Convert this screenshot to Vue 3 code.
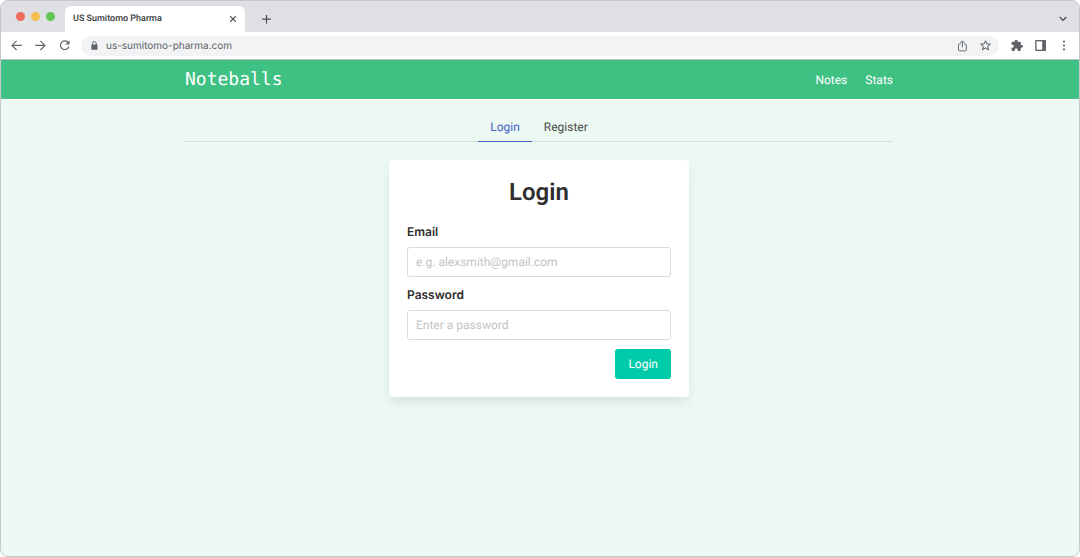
<script setup>
import { ref } from 'vue'

const address = ref('us-sumitomo-pharma.com')
const email = ref('')
const password = ref('')
</script>

<template>
  <div class="window">
    <header class="tab-strip">
      <div class="lights">
        <span class="light red"></span>
        <span class="light yellow"></span>
        <span class="light green"></span>
      </div>
      <div class="browser-tab">
        <span class="tab-title">US Sumitomo Pharma</span>
        <button class="icon-button" type="button" aria-label="Close tab">
          <svg width="8" height="8" viewBox="0 0 8 8"><path d="M1.2 1.2l5.6 5.6M6.8 1.2L1.2 6.8" stroke="#4a4d51" stroke-width="1.2" /></svg>
        </button>
      </div>
      <button class="icon-button new-tab" type="button" aria-label="New tab">
        <svg width="10" height="10" viewBox="0 0 10 10"><path d="M5.5 .9v8.6M1.2 5.2h8.6" stroke="#46494d" stroke-width="1.2" /></svg>
      </button>
      <button class="icon-button tab-menu" type="button" aria-label="Search tabs">
        <svg width="8" height="6" viewBox="0 0 8 6"><path d="M.7 1L4 4.4 7.3 1" fill="none" stroke="#46494d" stroke-width="1.3" /></svg>
      </button>
    </header>

    <div class="toolbar">
      <div class="history">
        <button class="icon-button" type="button" aria-label="Back">
          <svg width="12" height="12" viewBox="0 0 12 12"><path d="M11.8 5.4H2.1M6.6 .8L2 5.4 6.6 10" fill="none" stroke="#5f6368" stroke-width="1.1" /></svg>
        </button>
        <button class="icon-button" type="button" aria-label="Forward">
          <svg width="12" height="12" viewBox="0 0 12 12"><path d="M1.2 5.4h9.7M6.4 .8L11 5.4 6.4 10" fill="none" stroke="#5f6368" stroke-width="1.1" /></svg>
        </button>
        <button class="icon-button" type="button" aria-label="Reload">
          <svg width="12" height="12" viewBox="0 0 12 12"><path d="M10.3 2.7A4.3 4.3 0 1 0 10.9 6.5" fill="none" stroke="#5f6368" stroke-width="1.2" /><path d="M11.5.4v4.2H7.3z" fill="#5f6368" /></svg>
        </button>
      </div>
      <div class="address-bar">
        <svg width="8" height="10" viewBox="0 0 8 10"><path d="M2.6 4V2.4a1.8 1.8 0 0 1 3.6 0V4" fill="none" stroke="#5f6368" stroke-width="1" /><rect x="1.3" y="3.6" width="6.2" height="5.2" rx=".8" fill="#5f6368" /></svg>
        <input v-model="address" class="address" type="text" aria-label="Address" />
        <button class="icon-button" type="button" aria-label="Share">
          <svg width="10" height="12" viewBox="0 0 10 12"><path d="M2.8 4.1H1.2a.7.7 0 0 0-.7.7v5.3c0 .4.3.7.7.7h6.4c.4 0 .7-.3.7-.7V4.8a.7.7 0 0 0-.7-.7H6M4.4 7.4V1M2.4 2.9l2-2 2 2" fill="none" stroke="#6b6f73" stroke-width="1" /></svg>
        </button>
        <button class="icon-button" type="button" aria-label="Bookmark">
          <svg width="12" height="12" viewBox="0 0 12 12"><path d="M5.5 .8l1.4 3.1 3.4.3-2.6 2.3.8 3.3-3-1.8-3 1.8.8-3.3L.7 4.2l3.4-.3z" fill="none" stroke="#505458" stroke-width="1" /></svg>
        </button>
      </div>
      <div class="extensions">
        <button class="icon-button" type="button" aria-label="Extensions">
          <svg width="12" height="12" viewBox="1 2 22 22"><path d="M20.5 11H19V7c0-1.1-.9-2-2-2h-4V3.5a2.5 2.5 0 0 0-5 0V5H4c-1.1 0-2 .9-2 2v3.8h1.5a2.7 2.7 0 0 1 0 5.4H2V20c0 1.1.9 2 2 2h3.8v-1.5a2.7 2.7 0 0 1 5.4 0V22H17c1.1 0 2-.9 2-2v-4h1.5a2.5 2.5 0 0 0 0-5z" fill="#5f6368" /></svg>
        </button>
        <button class="icon-button" type="button" aria-label="Side panel">
          <svg width="12" height="12" viewBox="0 0 12 12"><rect x=".9" y=".7" width="9.4" height="9.6" fill="none" stroke="#5f6368" stroke-width="1.3" /><path d="M7.2.5h3.2v10H7.2z" fill="#5f6368" /></svg>
        </button>
        <button class="icon-button" type="button" aria-label="Menu">
          <svg width="12" height="12" viewBox="0 0 12 12" fill="#5f6368"><circle cx="5" cy="1.6" r="1.1" /><circle cx="5" cy="5.5" r="1.1" /><circle cx="5" cy="9.4" r="1.1" /></svg>
        </button>
      </div>
    </div>

    <nav class="navbar">
      <div class="container navbar-row">
        <a class="brand" href="#">Noteballs</a>
        <div class="links">
          <a href="#notes">Notes</a>
          <a href="#stats">Stats</a>
        </div>
      </div>
    </nav>

    <main class="page">
      <div class="container">
        <div class="auth-tabs">
          <a class="auth-tab active" href="#login">Login</a>
          <a class="auth-tab" href="#register">Register</a>
        </div>
        <form class="card" @submit.prevent>
          <h1>Login</h1>
          <div class="field">
            <label for="email">Email</label>
            <input id="email" v-model="email" type="email" placeholder="e.g. alexsmith@gmail.com" />
          </div>
          <div class="field">
            <label for="password">Password</label>
            <input id="password" v-model="password" type="password" placeholder="Enter a password" />
          </div>
          <div class="actions">
            <button class="submit" type="submit">Login</button>
          </div>
        </form>
      </div>
    </main>
  </div>
</template>

<style>
body {
  background: #fff;
}
</style>

<style scoped>
* {
  box-sizing: border-box;
}

.window {
  display: flex;
  flex-direction: column;
  min-height: 100vh;
  overflow: hidden;
  border: 1px solid #c5c8c8;
  border-radius: 8px;
  background: #ebf9f2;
  font-family: Roboto, "Liberation Sans", sans-serif;
  font-size: 12px;
  line-height: 18px;
  text-rendering: geometricPrecision;
}

a {
  text-decoration: none;
}

.icon-button {
  display: flex;
  flex: none;
  padding: 0;
  border: 0;
  background: none;
}

.tab-strip {
  display: flex;
  align-items: center;
  height: 31px;
  padding: 0 12px 0 15px;
  background: #dfe0e4;
}

.lights {
  display: flex;
  gap: 6px;
}

.light {
  width: 9px;
  height: 9px;
  border-radius: 50%;
}

.red {
  background: #ed6a5e;
}

.yellow {
  background: #f5bf4f;
}

.green {
  background: #61c554;
}

.browser-tab {
  display: flex;
  align-items: center;
  justify-content: space-between;
  align-self: flex-end;
  width: 180px;
  height: 26px;
  margin-left: 10px;
  padding: 0 8px;
  border-radius: 6px 6px 0 0;
  background: #fff;
}

.tab-title {
  color: #35383b;
  font-size: 9px;
  font-weight: 500;
}

.new-tab {
  margin: 5px 0 0 16px;
}

.tab-menu {
  margin: 5px 0 0 auto;
}

.toolbar {
  display: flex;
  align-items: center;
  height: 28px;
  padding: 0 8px 0 9px;
  border-bottom: 1px solid #b9c3c1;
  background: #fff;
}

.history,
.extensions {
  display: flex;
  gap: 12px;
}

.address-bar {
  display: flex;
  flex: 1;
  align-items: center;
  gap: 12px;
  height: 20px;
  margin: 0 12px 0 11px;
  padding: 0 7px 0 9px;
  border-radius: 10px;
  background: #f1f3f4;
}

.address {
  flex: 1;
  min-width: 0;
  margin-left: -4px;
  padding: 0;
  border: 0;
  outline: 0;
  background: none;
  color: #5f6368;
  font-family: Inter, sans-serif;
  font-size: 10px;
  text-rendering: inherit;
}

.container {
  width: 100%;
  max-width: 708px;
  margin: 0 auto;
}

.navbar {
  padding-right: 2px;
  border-bottom: 1px solid #fbfefc;
  background: #3fc184;
}

.navbar-row {
  display: flex;
  align-items: center;
  justify-content: space-between;
  height: 39px;
}

.brand {
  color: #fff;
  font-family: "DejaVu Sans Mono", monospace;
  font-size: 18px;
  line-height: 20px;
}

.links {
  display: flex;
  gap: 18px;
}

.links a {
  color: #fff;
}

.page {
  flex: 1;
  padding: 18px 2px 18px 0;
}

.auth-tabs {
  display: flex;
  justify-content: center;
  margin-bottom: 18px;
  box-shadow: inset 0 -1px #d3dfd9;
}

.auth-tab {
  padding: 0 12px 5px;
  border-bottom: 1px solid transparent;
  color: #4a4a4a;
}

.auth-tab.active {
  border-color: #485fc7;
  color: #485fc7;
}

.card {
  max-width: 300px;
  margin: 0 auto;
  padding: 18px;
  border-radius: 4px;
  background: #fff;
  box-shadow: 0 6px 12px -2px rgba(10, 10, 10, 0.1), 0 0 1px rgba(10, 10, 10, 0.02);
}

h1 {
  margin: 0 0 16px;
  color: #2f2f2f;
  font-size: 24px;
  font-weight: 600;
  line-height: 29px;
  text-align: center;
}

.field {
  margin-bottom: 9px;
}

label {
  display: block;
  margin-bottom: 6px;
  color: #2c2c2c;
  font-family: Inter, sans-serif;
  font-weight: 600;
}

.field input {
  display: block;
  width: 100%;
  height: 30px;
  padding: 0 8px;
  border: 1px solid #dbdbdb;
  border-radius: 3px;
  background: #fff;
  color: #363636;
  font: inherit;
  text-rendering: inherit;
}

.field input::placeholder {
  color: #c3c3c3;
  opacity: 1;
}

.actions {
  display: flex;
  justify-content: flex-end;
}

.submit {
  height: 30px;
  padding: 0 13px;
  border: 0;
  border-radius: 3px;
  background: #00cba9;
  color: #fff;
  font: inherit;
  text-rendering: inherit;
}
</style>
